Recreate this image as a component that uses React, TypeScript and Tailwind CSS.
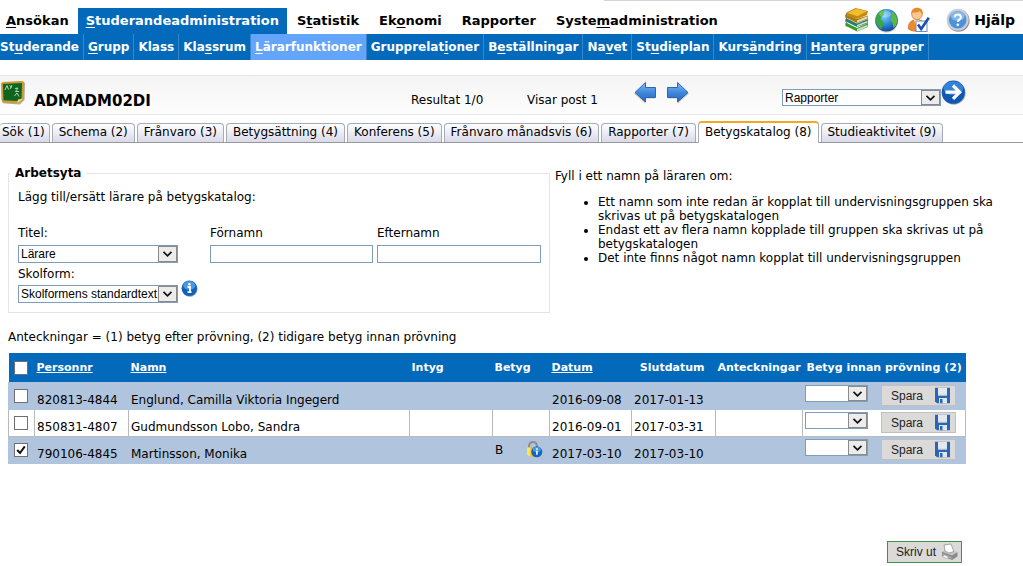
import type { ReactNode } from "react";

// The letter between underscores is the access key
const mainMenu = [
  { label: "_A_nsökan" },
  { label: "_S_tuderandeadministration", active: true },
  { label: "S_t_atistik" },
  { label: "Ek_o_nomi" },
  { label: "Rapporter" },
  { label: "Syste_m_administration" },
];

const subMenu = [
  { label: "St_u_derande" },
  { label: "_G_rupp" },
  { label: "Klass" },
  { label: "Kla_s_srum" },
  { label: "_L_ärarfunktioner", active: true },
  { label: "Grupprelat_i_oner" },
  { label: "B_e_ställningar" },
  { label: "Na_v_et" },
  { label: "St_u_dieplan" },
  { label: "Kurs_ä_ndring" },
  { label: "_H_antera grupper" },
];

const tabs = [
  "Sök (1)",
  "Schema (2)",
  "Frånvaro (3)",
  "Betygsättning (4)",
  "Konferens (5)",
  "Frånvaro månadsvis (6)",
  "Rapporter (7)",
  "Betygskatalog (8)",
  "Studieaktivitet (9)",
];

const students = [
  { nr: "820813-4844", name: "Englund, Camilla Viktoria Ingegerd", grade: "", start: "2016-09-08", end: "2017-01-13", checked: false },
  { nr: "850831-4807", name: "Gudmundsson Lobo, Sandra", grade: "", start: "2016-09-01", end: "2017-03-31", checked: false },
  { nr: "790106-4845", name: "Martinsson, Monika", grade: "B", start: "2017-03-10", end: "2017-03-10", checked: true },
];

function AccessLabel({ text }: { text: string }) {
  const [before, key, after] = text.split("_");
  return (
    <>
      {before}
      {key && <u className="underline-offset-2">{key}</u>}
      {after}
    </>
  );
}

function Select({ id, label, options, className }: { id: string; label?: string; options: string[]; className: string }) {
  return (
    <span className={`relative inline-block align-top ${className}`}>
      <select
        id={id}
        aria-label={label}
        className="block size-full appearance-none border border-[#7f9db9] bg-white pl-0.5 text-[12px] leading-none text-black"
        style={{ fontFamily: '"Liberation Sans", sans-serif' }}
      >
        {options.map((o) => (
          <option key={o}>{o}</option>
        ))}
      </select>
      <span className="pointer-events-none absolute inset-y-px right-px flex w-[19px] items-center justify-center border border-[#8a8a8a] bg-[#ececec]">
        <svg width="11" height="8" viewBox="0 0 11 8" fill="none" stroke="#111" strokeWidth="1.7">
          <path d="M1.5 1.8 5.5 5.8 9.5 1.8" />
        </svg>
      </span>
    </span>
  );
}

function CheckBox({ label, checked = false }: { label: string; checked?: boolean }) {
  return (
    <span className="relative block size-[14px]">
      <input
        type="checkbox"
        aria-label={label}
        defaultChecked={checked}
        className="peer block size-full appearance-none border border-[#707070] bg-white"
      />
      <svg
        viewBox="0 0 14 14"
        className="pointer-events-none invisible absolute inset-0 peer-checked:visible"
        fill="none"
        stroke="#111"
        strokeWidth="2"
      >
        <path d="M3.2 7 6 10 10.8 3.4" />
      </svg>
    </span>
  );
}

function BooksIcon() {
  return (
    <svg width="24" height="26" viewBox="0 0 24 26">
      <path d="M1 19 12 24.5 23 20V16L12 21 1 15.5Z" fill="#3f9a2c" />
      <path d="M12 22 22.5 17.8V19.8L12 24.2Z" fill="#cfe3bd" />
      <path d="M1 14.5 12 20 23 16V12L12 16.5 1 11Z" fill="#2a7f72" />
      <path d="M12 18 22.5 13.8V15.6L12 19.6Z" fill="#cfdedd" />
      <path d="M1 10.5 12 16 23 12V8.5L12 12 1 7Z" fill="#a87a12" />
      <path d="M12 13.4 22.5 9.3V11.4L12 15.4Z" fill="#eadfb4" />
      <path d="M1.5 5.5 10.5 1 23 4 22 8 12 12 1.5 8.5Z" fill="#c08a12" />
      <path d="M2.5 6 11 1.8 22 4.3 12.5 9.3Z" fill="#f1bd2c" />
      <path d="M1.5 6.5C.3 9 .3 10 1.5 11.5M1.5 11.5C.3 13 .3 14.5 1.5 15.8M1.5 15.8C.3 17 .6 18.5 1.5 19.4" fill="none" stroke="#555" strokeWidth=".8" />
    </svg>
  );
}

function GlobeIcon() {
  return (
    <svg width="25" height="25" viewBox="0 0 25 25">
      <defs>
        <radialGradient id="sea" cx=".4" cy=".3" r=".75">
          <stop offset="0" stopColor="#7fd0fb" />
          <stop offset=".55" stopColor="#2a86d6" />
          <stop offset="1" stopColor="#0c3f8c" />
        </radialGradient>
      </defs>
      <circle cx="12.5" cy="13" r="11.5" fill="#999" opacity=".5" />
      <circle cx="12.5" cy="12.3" r="11.3" fill="url(#sea)" />
      <path d="M2.5 8C4 4 7 2 10 1.5L11 3 9.5 5 10 7 7.5 9 6.5 12 9 13.5 10 16.5 8 19 7.5 21.5C4 19 2 15.5 2 12Z" fill="#3aa83d" />
      <path d="M17 4.5 19.5 4.5C22 7 23.5 10 23.5 13L22 17.5 19.5 20 18.5 15 16.5 12 17.5 8.5Z" fill="#58bb3c" />
      <ellipse cx="11" cy="6" rx="6" ry="3.5" fill="#fff" opacity=".25" />
    </svg>
  );
}

function UserCheckIcon() {
  return (
    <svg width="23" height="26" viewBox="0 0 23 26">
      <path d="M1.5 22C1 16.5 3.5 13.5 8 13H12C16.5 13.5 18.5 16.5 18 22 13 25 6 25 1.5 22Z" fill="#ee8a2a" stroke="#bd6418" strokeWidth=".7" />
      <path d="M7 13 9.8 20 12.5 13Z" fill="#fff3df" />
      <circle cx="10" cy="7.3" r="5.3" fill="#f9c791" stroke="#c9802f" strokeWidth=".8" />
      <path d="M4.3 7C4 2.5 7 .8 10.3.8S16.3 3 15.7 7C14 6.5 13.5 5 13 4 10 6 7 5.5 6 5.2Z" fill="#e48a28" />
      <rect x="9" y="14" width="11" height="10.5" fill="#fff" stroke="#6f8fc4" />
      <path d="M11 17.5 14.2 22 21.8 10.8" fill="none" stroke="#1a4fae" strokeWidth="2.6" />
    </svg>
  );
}

function HelpIcon() {
  return (
    <svg width="24" height="24" viewBox="0 0 24 24">
      <circle cx="12.4" cy="12.6" r="11.2" fill="#8f8f8f" />
      <circle cx="11.7" cy="11.7" r="11" fill="#c9ced5" />
      <circle cx="11.7" cy="11.7" r="8.8" fill="#4e92da" />
      <ellipse cx="11.7" cy="8" rx="7" ry="4.8" fill="#85b9ee" />
      <path d="M8.7 9.3C8.7 5.4 14.9 5.5 14.9 9.2 14.9 11.4 11.8 11.4 11.8 14" fill="none" stroke="#fff" strokeWidth="2" />
      <circle cx="11.8" cy="16.8" r="1.3" fill="#fff" />
    </svg>
  );
}

function BoardIcon() {
  return (
    <svg width="26" height="26" viewBox="0 0 26 26">
      <path d="M2.5 2.5 22 1.5Q25 1.5 25 4L24.5 20 20 24.5 4.5 23.5Q2 23 2 20Z" fill="#8a7a55" opacity=".6" />
      <path d="M1 4Q1 2 3.5 2L22 1Q24 1 24 3L23.5 19 18.5 23.5 4 22.5Q1.5 22 1.5 20Z" fill="#c99a35" />
      <path d="M3 4 22 3 21.5 18.5 17.5 21 3.5 20.3Z" fill="#0f6420" />
      <path d="M5 10 7 5.5 8.5 9.5M9.5 5.5 12 7.5M12 5 10 9M15 8.5 18 8 15.5 11.5 19 11.5M14.5 16 17 13 19 16.5" fill="none" stroke="#c6e3c3" strokeWidth=".9" />
      <path d="M17 23.5 18 19.5 23.3 18.5Z" fill="#f0d47f" />
    </svg>
  );
}

function ArrowIcon({ flip = false }: { flip?: boolean }) {
  return (
    <svg width="24" height="24" viewBox="0 0 24 24" className={flip ? "-scale-x-100" : ""}>
      <defs>
        <linearGradient id="arrow" x1="0" y1="0" x2="0" y2="1">
          <stop offset="0" stopColor="#86bcf2" />
          <stop offset=".5" stopColor="#4189dc" />
          <stop offset="1" stopColor="#2565bd" />
        </linearGradient>
      </defs>
      <path d="M2 8.5H12V4L23 13.5 12 23.5V18.5H2Z" fill="#999" opacity=".5" />
      <path d="M1.5 7.5H11.5V2.5L22 12.5 11.5 22V17.5H1.5Z" fill="url(#arrow)" stroke="#2b66b4" strokeLinejoin="round" />
    </svg>
  );
}

function GoIcon() {
  return (
    <svg width="25" height="25" viewBox="0 0 25 25">
      <circle cx="12.8" cy="13" r="11.8" fill="#7c8ea5" opacity=".7" />
      <circle cx="12.3" cy="12.2" r="11.6" fill="#1158b2" />
      <ellipse cx="12.3" cy="8.2" rx="9.8" ry="7" fill="#3583d6" />
      <path d="M4.5 12.2H18M12 5.5 18.7 12.2 12 18.9" fill="none" stroke="#fff" strokeWidth="3.2" />
    </svg>
  );
}

function InfoIcon() {
  return (
    <svg width="17" height="17" viewBox="0 0 17 17">
      <circle cx="8.8" cy="8.9" r="7.8" fill="#8a9cb4" />
      <circle cx="8.3" cy="8.2" r="7.7" fill="#1261b8" />
      <ellipse cx="8.3" cy="5.5" rx="6" ry="4.4" fill="#4a97e2" />
      <path d="M6.5 7H9V12M6.5 12.2H10.5" fill="none" stroke="#fff" strokeWidth="1.8" />
      <circle cx="8.3" cy="4.2" r="1.3" fill="#fff" />
    </svg>
  );
}

function LockIcon() {
  return (
    <svg width="17" height="17" viewBox="0 0 17 17">
      <path d="M3 7V5Q3.5 1 7 1T11 5V7" fill="none" stroke="#8d8d8d" strokeWidth="2" />
      <path d="M1 6.5 12 6V14L6 16 1 14Z" fill="#e8b923" />
      <path d="M1 6.5 4.5 6.4V15.5L1 14Z" fill="#fbe36a" />
      <circle cx="10.8" cy="10.8" r="5.5" fill="#1464c0" />
      <ellipse cx="10.8" cy="8.5" rx="4" ry="2.8" fill="#4b9ae6" />
      <path d="M10.9 9.8V13.8M10.9 7.3V8.8" stroke="#fff" strokeWidth="1.6" />
    </svg>
  );
}

function DiskIcon() {
  return (
    <svg width="17" height="17" viewBox="0 0 17 17">
      <path d="M1 .8H16V16.2H3L1 14.2Z" fill="#2b66b6" />
      <path d="M4 .8H13V8.5H4Z" fill="#e4e7ec" />
      <path d="M4 8H13" stroke="#c9d2de" />
      <path d="M5 11H13V16.2H5Z" fill="#dfe6ee" />
      <path d="M6 12H8.5V16.2H6Z" fill="#2b66b6" />
    </svg>
  );
}

function PrinterIcon() {
  return (
    <svg width="18" height="18" viewBox="0 0 18 18">
      <path d="M1 9 6 6.5 16.5 9.5V13.5L11 17 1 13Z" fill="#8b8b8b" />
      <path d="M1 8.7 6.5 6 16.5 9 11 12.5Z" fill="#c6c6c6" />
      <path d="M4 8 3 2 10 1 12.8 8.5 8 10Z" fill="#fff" stroke="#888" strokeWidth=".7" />
      <path d="M1.5 10.5 10.8 14.2V16L1.5 12.5Z" fill="#a9a9a9" />
      <path d="M3.5 12 8 14 5.5 15.5 1.5 13.5Z" fill="#f5f5f5" stroke="#999" strokeWidth=".5" />
    </svg>
  );
}

function GreyButton({ children, className }: { children: ReactNode; className: string }) {
  return (
    <button
      type="button"
      className={`flex items-center justify-between border bg-[#dcd9d9] text-[12px] leading-none text-[#222] ${className}`}
      style={{ fontFamily: '"Liberation Sans", sans-serif' }}
    >
      {children}
    </button>
  );
}

function TopBar() {
  return (
    <header>
      <div className="ml-auto h-px w-[41%] bg-[#d4d4d4]" />
      <div className="flex h-[33px] items-end justify-between">
        <nav className="flex text-[13px] font-bold">
          {mainMenu.map((m, i) => (
            <a
              key={m.label}
              href="#"
              className={`flex h-[26px] items-center whitespace-nowrap ${i === 0 ? "pr-[9px] pl-1.5" : m.active ? "bg-[#0369bb] px-2 text-white" : "px-2.5"}`}
            >
              <AccessLabel text={m.label} />
            </a>
          ))}
        </nav>
        <div className="flex items-center pr-2 pb-px">
          <a href="#" aria-label="Bibliotek"><BooksIcon /></a>
          <a href="#" aria-label="Webb" className="ml-[5px]"><GlobeIcon /></a>
          <a href="#" aria-label="Användare" className="ml-2"><UserCheckIcon /></a>
          <a href="#" className="ml-4 flex items-center text-[14px] font-bold">
            <HelpIcon />
            <span className="pl-1">Hjälp</span>
          </a>
        </div>
      </div>
      <nav className="flex h-[26px] bg-[#0369bb] text-[12px] font-bold text-white">
        {subMenu.map((m, i) => (
          <a
            key={m.label}
            href="#"
            className={`flex items-center border-r border-[#3b86c8] pr-1 whitespace-nowrap ${i === 0 ? "pl-0" : "pl-1"} ${m.active ? "bg-[#63a5fb]" : ""}`}
          >
            <AccessLabel text={m.label} />
          </a>
        ))}
      </nav>
    </header>
  );
}

function RecordBar() {
  return (
    <div className="mt-[15px] grid h-10 grid-cols-[411fr_116fr_106fr_149fr_241fr] border-y border-[#e6e6e6] bg-linear-to-b from-[#f4f4f4] to-[#fdfdfd]">
      <div className="flex gap-2">
        <span className="pt-1"><BoardIcon /></span>
        <h1 className="pt-4 text-[15px] leading-[18px] font-bold">ADMADM02DI</h1>
      </div>
      <p className="pt-4 leading-4">Resultat 1/0</p>
      <p className="pt-4 leading-4">Visar post 1</p>
      <div className="flex items-start gap-[9px] pt-1">
        <button type="button" aria-label="Föregående"><ArrowIcon flip /></button>
        <button type="button" aria-label="Nästa"><ArrowIcon /></button>
      </div>
      <div className="flex items-start pt-1">
        <Select id="report" label="Rapport" options={["Rapporter"]} className="mt-[9px] h-[17px] w-[159px]" />
        <button type="button" aria-label="Gå"><GoIcon /></button>
      </div>
    </div>
  );
}

function Tabs() {
  return (
    <nav className="mt-1.5 flex h-[22px] items-end gap-0.5 border-b border-[#999] leading-4">
      {tabs.map((t, i) =>
        t === "Betygskatalog (8)" ? (
          <a
            key={t}
            href="#"
            aria-current="page"
            className="-mb-px flex h-[22px] items-center rounded-t border-x border-t-2 border-x-[#aab] border-t-[#f5a623] bg-white px-1.5 pb-0.5 whitespace-nowrap"
          >
            {t}
          </a>
        ) : (
          <a
            key={t}
            href="#"
            className={`flex h-[19px] items-center rounded-t border border-b-0 border-[#a3acba] bg-linear-to-b from-white to-[#d9d9ea] pb-0.5 whitespace-nowrap ${i === 0 ? "border-l-0 pr-1 pl-0.5" : "px-1.5"}`}
          >
            {t}
          </a>
        ),
      )}
    </nav>
  );
}

function Workspace() {
  return (
    <section className="grid grid-cols-[542fr_468fr] gap-[5px] pt-[22px] pl-2">
      <fieldset className="h-[148px] border border-[#e4e4e4] pr-2 pl-[9px]">
        <legend className="-ml-2 px-[5px] leading-4 font-bold">Arbetsyta</legend>
        <p className="pt-2 leading-4">Lägg till/ersätt lärare på betygskatalog:</p>
        <div className="mt-5 grid grid-cols-[192px_167fr_164fr] leading-4">
          <div>
            <label htmlFor="title" className="block">Titel:</label>
            <Select id="title" options={["Lärare"]} className="mt-1 h-[18px] w-40" />
            <label htmlFor="school" className="mt-[3px] block">Skolform:</label>
            <div className="flex items-start gap-[3px]">
              <Select id="school" options={["Skolformens standardtext"]} className="mt-[3px] h-[18px] w-40" />
              <button type="button" aria-label="Information" className="-mt-0.5"><InfoIcon /></button>
            </div>
          </div>
          <div className="pr-1">
            <label htmlFor="first" className="block">Förnamn</label>
            <input id="first" type="text" className="mt-1 block h-[18px] w-full border border-[#7f9db9] bg-white px-1" />
          </div>
          <div>
            <label htmlFor="last" className="block">Efternamn</label>
            <input id="last" type="text" className="mt-1 block h-[18px] w-full border border-[#7f9db9] bg-white px-1" />
          </div>
        </div>
      </fieldset>
      <div className="pt-1 pr-6 leading-[14px]">
        <p>Fyll i ett namn på läraren om:</p>
        <ul className="mt-3 list-disc pl-[43px]">
          <li>Ett namn som inte redan är kopplat till undervisningsgruppen ska skrivas ut på betygskatalogen</li>
          <li>Endast ett av flera namn kopplade till gruppen ska skrivas ut på betygskatalogen</li>
          <li>Det inte finns något namn kopplat till undervisningsgruppen</li>
        </ul>
      </div>
    </section>
  );
}

function StudentTable() {
  return (
    <table className="mt-2 w-full table-fixed border-collapse text-left leading-4">
      <colgroup>
        <col className="w-[26px]" />
        <col className="w-[94px]" />
        <col />
        <col className="w-[83px]" />
        <col className="w-[57px]" />
        <col className="w-[82px]" />
        <col className="w-[84px]" />
        <col className="w-[87px]" />
        <col className="w-[163px]" />
      </colgroup>
      <thead>
        <tr className="h-[29px] bg-[#0369bb] text-[11px] whitespace-nowrap text-white [&>th]:pt-0.5">
          <th className="pl-[5px]"><CheckBox label="Markera alla" /></th>
          <th className="pl-0.5"><a href="#" className="underline">Personnr</a></th>
          <th className="pl-0.5"><a href="#" className="underline">Namn</a></th>
          <th className="pl-0.5">Intyg</th>
          <th className="pl-0.5">Betyg</th>
          <th className="pl-0.5"><a href="#" className="underline">Datum</a></th>
          <th className="pr-[11px] text-right">Slutdatum</th>
          <th className="pl-0.5">Anteckningar</th>
          <th className="pl-1">Betyg innan prövning (2)</th>
        </tr>
      </thead>
      <tbody>
        {students.map((s) => (
          <tr
            key={s.nr}
            className="h-[27px] odd:bg-[#b0c4de] [&>td]:border [&>td]:border-[#b9b9c0] odd:[&>td]:border-[#b0c4de] [&>td]:p-0"
          >
            <td><div className="pl-[5px]"><CheckBox label={s.nr} checked={s.checked} /></div></td>
            <td><div className="pt-2 pl-0.5">{s.nr}</div></td>
            <td><div className="pt-2 pl-0.5">{s.name}</div></td>
            <td />
            <td>
              <div className="flex items-center justify-between pr-1.5 pl-0.5">
                {s.grade}
                {s.grade && <LockIcon />}
              </div>
            </td>
            <td><div className="pt-2 pl-0.5">{s.start}</div></td>
            <td><div className="pt-2 pl-0.5">{s.end}</div></td>
            <td />
            <td>
              <div className="flex items-start justify-between pr-[9px] pl-0.5">
                <Select id={`grade-${s.nr}`} label="Betyg innan prövning" options={[""]} className="h-[17px] w-[63px]" />
                <GreyButton className="h-[21px] w-[75px] border-[#c3bfc0] pr-1 pl-[9px]">
                  Spara
                  <DiskIcon />
                </GreyButton>
              </div>
            </td>
          </tr>
        ))}
      </tbody>
    </table>
  );
}

export default function App() {
  return (
    <div className="bg-white text-[12px] text-black" style={{ fontFamily: '"DejaVu Sans", Verdana, sans-serif' }}>
      <TopBar />
      <RecordBar />
      <Tabs />
      <Workspace />
      <main className="pt-4 pr-[57px] pl-2">
        <p className="leading-4">Anteckningar = (1) betyg efter prövning, (2) tidigare betyg innan prövning</p>
        <StudentTable />
        <div className="mt-[77px] flex justify-end pr-1">
          <GreyButton className="h-[22px] w-[75px] border-[#3c963c] pr-0.5 pl-2">
            Skriv ut
            <PrinterIcon />
          </GreyButton>
        </div>
      </main>
    </div>
  );
}
